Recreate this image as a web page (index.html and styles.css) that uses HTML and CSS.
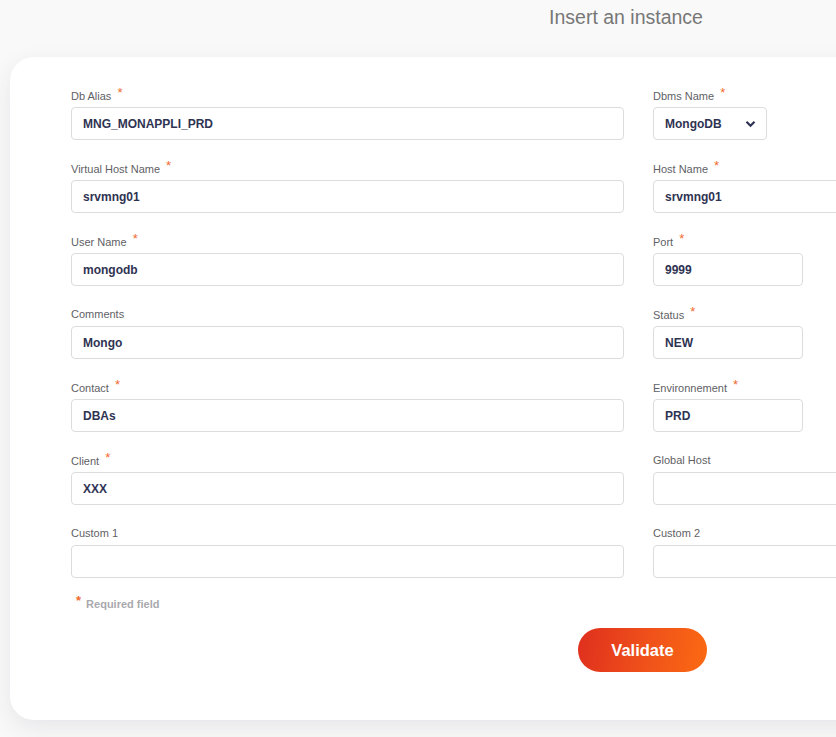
FILE: index.html
```html
<!DOCTYPE html>
<html>
<head>
<meta charset="utf-8">
<link rel="stylesheet" href="styles.css">
</head>
<body>
<div class="page">
  <h1 class="title">Insert an instance</h1>
  <div class="card">
    <form class="grid">
      <div class="field"><label>Db Alias <span class="star">*</span></label><input class="inp" value="MNG_MONAPPLI_PRD"></div>
      <div class="field"><label>Dbms Name <span class="star">*</span></label>
        <div class="select w-sel"><span>MongoDB</span>
          <svg width="11" height="8" viewBox="0 0 11 8"><path d="M1.5 1.8 L5.5 5.8 L9.5 1.8" fill="none" stroke="#2f3352" stroke-width="2.2"/></svg>
        </div>
      </div>
      <div class="field"><label>Virtual Host Name <span class="star">*</span></label><input class="inp" value="srvmng01"></div>
      <div class="field"><label>Host Name <span class="star">*</span></label><input class="inp w-wide" value="srvmng01"></div>
      <div class="field"><label>User Name <span class="star">*</span></label><input class="inp" value="mongodb"></div>
      <div class="field"><label>Port <span class="star">*</span></label><input class="inp w-sm" value="9999"></div>
      <div class="field"><label>Comments</label><input class="inp" value="Mongo"></div>
      <div class="field"><label>Status <span class="star">*</span></label><input class="inp w-sm" value="NEW"></div>
      <div class="field"><label>Contact <span class="star">*</span></label><input class="inp" value="DBAs"></div>
      <div class="field"><label>Environnement <span class="star">*</span></label><input class="inp w-sm" value="PRD"></div>
      <div class="field"><label>Client <span class="star">*</span></label><input class="inp" value="XXX"></div>
      <div class="field"><label>Global Host</label><input class="inp w-wide" value=""></div>
      <div class="field"><label>Custom 1</label><input class="inp" value=""></div>
      <div class="field"><label>Custom 2</label><input class="inp w-wide" value=""></div>
    </form>
    <p class="req"><span class="star">*</span> Required field</p>
    <div class="actions"><button class="btn" type="button">Validate</button></div>
  </div>
</div>
</body>
</html>
```
FILE: styles.css
```css
html, body {
  margin: 0;
  padding: 0;
  background: #f9f9f9;
  overflow: hidden;
  font-family: "Liberation Sans", Arial, sans-serif;
}
.page {
  width: 1252px;
  height: 737px;
}
.title {
  margin: 0;
  padding-top: 6px;
  height: 57px;
  box-sizing: border-box;
  text-align: center;
  font-weight: normal;
  font-size: 19.5px;
  line-height: 22px;
  color: #777;
}
.card {
  margin-left: 10px;
  width: 1232px;
  height: 663px;
  box-sizing: border-box;
  background: #fff;
  border-radius: 24px;
  box-shadow: 0 8px 24px rgba(40, 40, 80, 0.09);
  padding: 31px 0 0 61px;
}
.grid {
  display: grid;
  grid-template-columns: 553px 553px;
  column-gap: 29px;
  row-gap: 21px;
}
.field {
  display: flex;
  flex-direction: column;
  align-items: flex-start;
}
.field label {
  font-size: 11px;
  line-height: 15px;
  height: 15px;
  color: #5f5f66;
  margin-bottom: 4px;
}
.star {
  color: #f26b2e;
  font-size: 13px;
  position: relative;
  top: -3px;
  margin-left: 3px;
}
.inp {
  width: 553px;
  height: 33px;
  box-sizing: border-box;
  border: 1px solid #dcdcdf;
  border-radius: 4px;
  padding: 0 11px;
  font-family: "Liberation Sans", Arial, sans-serif;
  font-weight: bold;
  font-size: 12px;
  color: #2f3352;
  background: #fff;
  outline: none;
}
.w-sm { width: 150px; }
.w-wide { width: 553px; }
.select {
  height: 33px;
  box-sizing: border-box;
  border: 1px solid #dcdcdf;
  border-radius: 4px;
  padding: 0 10px 0 11px;
  display: flex;
  align-items: center;
  justify-content: space-between;
  font-weight: bold;
  font-size: 12px;
  color: #2f3352;
}
.w-sel { width: 114px; }
.req {
  margin: 18px 0 0 5px;
  font-size: 11px;
  line-height: 15px;
  font-weight: bold;
  color: #a9a9ad;
}
.req .star {
  margin-left: 0;
  margin-right: 2px;
}
.actions {
  margin-top: 16px;
  padding-left: 507px;
}
.btn {
  width: 129px;
  height: 44px;
  border: none;
  border-radius: 22px;
  background: linear-gradient(100deg, #df2f1e 0%, #f0521a 55%, #fb6a12 100%);
  color: #fff;
  font-family: "Liberation Sans", Arial, sans-serif;
  font-weight: bold;
  font-size: 16.5px;
  cursor: pointer;
}
```
